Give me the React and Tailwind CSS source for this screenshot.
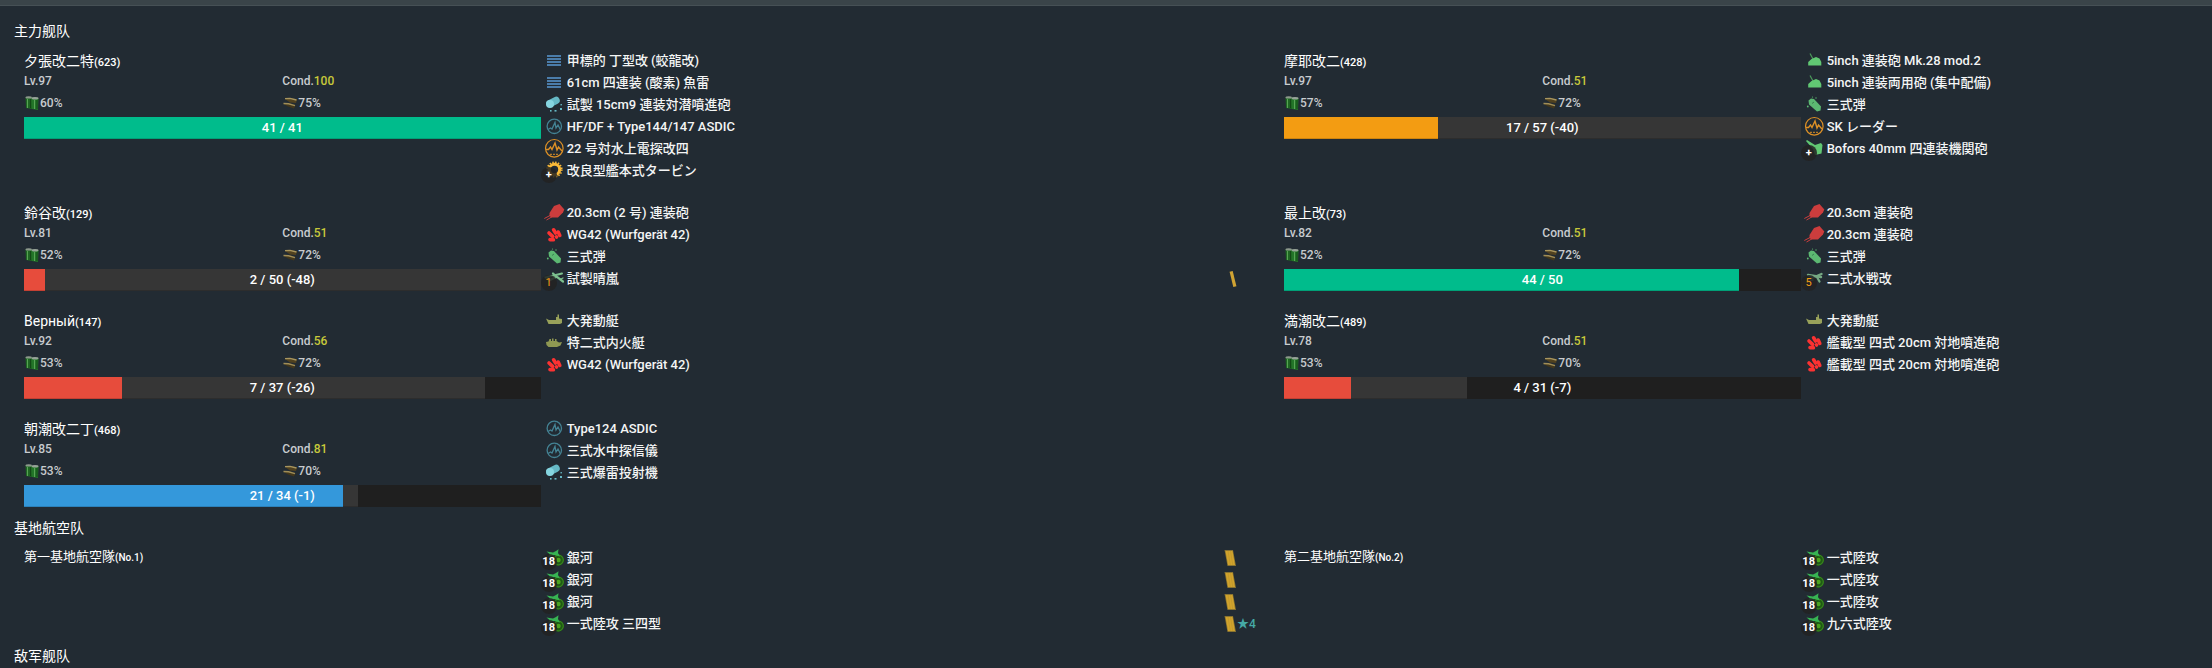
const CJK_FONT = "font-[Roboto,'Noto_Sans_CJK_JP',sans-serif]";

const GLYPHS = {
  torpedo: (
    <g fill="#4b7dab">
      <rect x="4" y="5" width="14" height="2" />
      <rect x="4" y="8" width="14" height="2" />
      <rect x="4" y="11" width="14" height="2" />
      <rect x="4" y="14" width="14" height="2" />
    </g>
  ),
  depth: (
    <g>
      <path d="M7 9.5 13 6.5" stroke="#66b9c6" strokeWidth="7.5" strokeLinecap="round" />
      <circle cx="7" cy="10" r="4" fill="#86d5e0" />
      <g fill="#66b9c6">
        <rect x="7" y="16" width="1.6" height="1.6" />
        <rect x="11.5" y="16" width="2" height="1.6" />
        <rect x="17" y="14" width="2" height="2" />
        <rect x="17.5" y="10" width="1.4" height="1.4" />
      </g>
    </g>
  ),
  sonar: (
    <g fill="none" stroke="#448394">
      <circle cx="11.3" cy="10.3" r="7.2" strokeWidth="1.3" />
      <path d="M5 13.5 7.5 12 9 13 12 6.5 13 12 15 9 17.5 14" strokeWidth="1.3" />
    </g>
  ),
  radar: (
    <g fill="none" stroke="#dd9026">
      <circle cx="11.3" cy="10.3" r="8.8" strokeWidth="1.2" />
      <path d="M3 11.5H5.5L7.5 9 9 11.5 12 5 14 12 15.5 9 19 13" strokeWidth="1.4" />
      <path d="M7 16.3H16" strokeWidth="1" strokeDasharray="2 1" />
    </g>
  ),
  turbine: (
    <g fill="none" stroke="#f9b938">
      <circle cx="11.5" cy="9.5" r="5.2" strokeWidth="3" />
      <circle cx="11.5" cy="9.5" r="7.3" strokeWidth="1.6" strokeDasharray="1.5 1.4" />
    </g>
  ),
  redgun: (
    <g>
      <path d="M6.5 11 11 4 16.5 2 21.3 7.5 20 10.5 15 15.5 8.5 15.5 6.5 14Z" fill="#cc3d3d" />
      <path d="M8 13 1.3 16.5M9.5 14.5 3.5 18" stroke="#cc3d3d" strokeWidth="1" />
    </g>
  ),
  rocket: (
    <g stroke="#fb3232" strokeWidth="3.6" strokeLinecap="round">
      <path d="M10.6 5.8 12.6 9" />
      <path d="M6 9 9.6 12.4" />
      <path d="M15.2 8 16.8 11.4" />
      <path d="M7 15.6 10.4 15.8" />
      <path d="M13.4 12.8 13.6 13" />
    </g>
  ),
  shell: (
    <g fill="#5cb872">
      <path d="M5.5 6.5 8 4.5 11 5 18 12.5 17.5 16.5 14 17.5 6 10.5Z" />
      <path d="M9 9.5 11 8" stroke="#3a8350" />
      <circle cx="4.8" cy="12.5" r="0.9" />
      <circle cx="13" cy="4" r="0.7" />
      <circle cx="9.5" cy="3" r="0.6" />
    </g>
  ),
  seaplane: (
    <g fill="none" stroke="#7cc18e" strokeLinecap="round">
      <path d="M2.5 9.5 19 5.5" strokeWidth="2" />
      <path d="M10 5.5 14 9 20 13.5" strokeWidth="2.2" />
      <path d="M6 12.5 13 9" strokeWidth="2.4" />
      <path d="M17 11.5 20 10" strokeWidth="1.2" />
    </g>
  ),
  seafighter: (
    <g fill="none" stroke="#75a883" strokeLinecap="round">
      <path d="M5 7 18 9" strokeWidth="2.4" />
      <path d="M8 10.5 18.5 6" strokeWidth="2.4" />
      <path d="M14 9 16.5 13.5" strokeWidth="2.2" />
      <path d="M5 12H10" strokeWidth="1.6" />
    </g>
  ),
  landing: (
    <path d="M3 8.5 6 10H13V7H14.5V4.5H16V8.5L19 9V13L17 14H5.5Z" fill="#98a15a" />
  ),
  amphibious: (
    <path d="M3 10 5.5 9.5 6.5 7H8V9H9V6.5H10.5V9H12V7H13.5V9L16 10.5 19 10 17.5 13.5 14 15H5.5L3.5 13Z" fill="#8f9852" />
  ),
  greengun: (
    <g>
      <path d="M7 3.5 10 9" stroke="#4b9a5b" strokeWidth="1.2" />
      <path d="M5.2 15.5V12L8.5 9 13 7 16.5 8.5 18.3 12V15.5Z" fill="#61c873" />
    </g>
  ),
  aagun: (
    <path d="M4 2 12 7 18 5 19.5 7 18.5 15.5 12 17 10 11 3 3Z" fill="#61c873" />
  ),
  bomber: (
    <g>
      <circle cx="15" cy="13" r="5.8" fill="#1f5a14" />
      <circle cx="15.5" cy="13" r="4.8" fill="none" stroke="#38861d" strokeWidth="1.2" />
      <circle cx="15.5" cy="13" r="2.2" fill="#4ba31f" />
      <path d="M3.5 4.5 10 5.5 13 4 15.5 2.3 15 6 17 9.5 11.5 8 5 10 6.5 7Z" fill="#37b353" />
    </g>
  ),
};

function EquipIcon({ kind, badge, badgeTone }) {
  return (
    <span className="relative h-[22px] w-[22px] shrink-0">
      <svg viewBox="0 0 22 22" className="h-[22px] w-[22px]" aria-hidden="true" fill="none">
        {GLYPHS[kind]}
      </svg>
      {badge && (
        <span
          className={`absolute -left-[2px] top-[7px] flex h-4 w-4 items-center justify-center rounded-full bg-[#222222]/85 pb-[2px] text-[11px] leading-none ${
            badgeTone === "orange" ? "font-normal text-[#f39c12]" : "font-bold text-white"
          }`}
        >
          {badge}
        </span>
      )}
    </span>
  );
}

function Proficiency({ marks }) {
  return (
    <svg viewBox="0 0 14 18" className="h-[18px] w-[14px]" aria-hidden="true">
      {marks === 1 ? (
        <path d="M8.5 3 11.5 15" stroke="#d0a333" strokeWidth="3.2" strokeLinecap="square" />
      ) : (
        <>
          <path d="M1.5 1H10L13 17H4.5Z" fill="#8a7430" />
          <path d="M2.5 2H9.5L12 16H5Z" fill="#d1a32c" />
          <path d="M5 2 7.3 16M7.5 2 9.8 16" stroke="#b8932f" strokeWidth="0.6" />
        </>
      )}
    </svg>
  );
}

function Equipment({ items }) {
  return (
    <ul className="col-span-7 pl-[2px] pr-[10px]">
      {items.map((it, i) => (
        <li key={i} className="flex h-[22px] items-center text-[13px] text-[#f4f5f5]">
          <EquipIcon kind={it[0]} badge={it[2]} badgeTone={it[3]} />
          <span className="ml-[2px] grow font-medium">{it[1]}</span>
          {it[4] && <Proficiency marks={it[4]} />}
          <span className="w-[17px] text-[12px] leading-5 font-medium whitespace-nowrap text-[#45a9a5]">{it[5]}</span>
        </li>
      ))}
    </ul>
  );
}

function Fuel() {
  return (
    <svg viewBox="0 0 16 16" className="h-4 w-4" aria-hidden="true">
      <path d="M1.5 2H8V14L2 13Z" fill="#1f6623" />
      <path d="M7.5 3H14.5L14 15 8 14Z" fill="#237528" />
      <path d="M3.5 4V13M10.5 5V14" stroke="#58a456" strokeWidth="1" />
      <path d="M6.5 4V13M13 5V14" stroke="#124816" strokeWidth="1" />
      <ellipse cx="4.7" cy="2.4" rx="3.2" ry="1.2" fill="#8d998d" />
      <ellipse cx="11" cy="3.3" rx="3.5" ry="1.3" fill="#98a498" />
    </svg>
  );
}

function Ammo() {
  return (
    <svg viewBox="0 0 16 16" className="h-4 w-4" aria-hidden="true">
      <path d="M3 4 9 3 15 4.5 14 8 8 7.5Z" fill="#50411f" />
      <path d="M3 3.6 8 3.4 14.5 5" stroke="#a8965f" strokeWidth="1.4" fill="none" />
      <path d="M1 8.5 7 8 13.5 10 12 13.5 6 11.5Z" fill="#43371b" />
      <path d="M1.5 8.5 6.5 8.8 13 10.7" stroke="#9f8d58" strokeWidth="1.4" fill="none" />
    </svg>
  );
}

function HealthBar({ hp, before, max, tone }) {
  const loss = before - hp;
  return (
    <div className="mt-[3px] grid h-[22px] bg-[#1f1f1f] text-[13px] leading-[21px]">
      <div className="col-start-1 row-start-1 flex">
        <div className={`shadow-[inset_0_-1px_0_rgba(0,0,0,0.15)] ${tone}`} style={{ width: `${(hp / max) * 100}%` }} />
        <div
          className="bg-[#363636] shadow-[inset_0_-1px_0_rgba(0,0,0,0.15)]"
          style={{ width: `${(loss / max) * 100}%` }}
        />
      </div>
      <div className="col-start-1 row-start-1 text-center font-medium text-white">
        {hp} / {max}
        {loss > 0 && ` (-${loss})`}
      </div>
    </div>
  );
}

function Ship({ ship }) {
  return (
    <article className="grid grid-cols-12 px-[10px] pb-5">
      <div className="col-span-5 h-[88px]">
        <h3 className="h-[22px] text-[14px] leading-[22px] text-white">
          {ship.name}
          <span className="text-[11px] font-medium">({ship.id})</span>
        </h3>
        <div className="grid grid-cols-2 text-[12px] font-medium text-[#c8cccf]">
          <span className="h-5 leading-[19px]">Lv.{ship.lv}</span>
          <span className="h-5 leading-[19px]">
            Cond.<span className="text-[#c8c93a]">{ship.cond}</span>
          </span>
          <span className="flex h-[22px] items-center">
            <Fuel />
            {ship.fuel}%
          </span>
          <span className="flex h-[22px] items-center">
            <Ammo />
            {ship.ammo}%
          </span>
        </div>
        <HealthBar {...ship} />
      </div>
      <Equipment items={ship.equips} />
    </article>
  );
}

const GREEN = "bg-[#00bc8c]";
const RED = "bg-[#e74c3c]";
const BLUE = "bg-[#3498db]";
const ORANGE = "bg-[#f39c12]";

const FLEET = [
  {
    name: "夕張改二特", id: 623, lv: 97, cond: 100, fuel: 60, ammo: 75, hp: 41, before: 41, max: 41, tone: GREEN,
    equips: [
      ["torpedo", "甲標的 丁型改 (蛟龍改)"],
      ["torpedo", "61cm 四連装 (酸素) 魚雷"],
      ["depth", "試製 15cm9 連装対潜噴進砲"],
      ["sonar", "HF/DF + Type144/147 ASDIC"],
      ["radar", "22 号対水上電探改四"],
      ["turbine", "改良型艦本式タービン", "+"],
    ],
  },
  {
    name: "摩耶改二", id: 428, lv: 97, cond: 51, fuel: 57, ammo: 72, hp: 17, before: 57, max: 57, tone: ORANGE,
    equips: [
      ["greengun", "5inch 連装砲 Mk.28 mod.2"],
      ["greengun", "5inch 連装両用砲 (集中配備)"],
      ["shell", "三式弾"],
      ["radar", "SK レーダー"],
      ["aagun", "Bofors 40mm 四連装機関砲", "+"],
    ],
  },
  {
    name: "鈴谷改", id: 129, lv: 81, cond: 51, fuel: 52, ammo: 72, hp: 2, before: 50, max: 50, tone: RED,
    equips: [
      ["redgun", "20.3cm (2 号) 連装砲"],
      ["rocket", "WG42 (Wurfgerät 42)"],
      ["shell", "三式弾"],
      ["seaplane", "試製晴嵐", "1", "orange", 1],
    ],
  },
  {
    name: "最上改", id: 73, lv: 82, cond: 51, fuel: 52, ammo: 72, hp: 44, before: 44, max: 50, tone: GREEN,
    equips: [
      ["redgun", "20.3cm 連装砲"],
      ["redgun", "20.3cm 連装砲"],
      ["shell", "三式弾"],
      ["seafighter", "二式水戦改", "5", "orange"],
    ],
  },
  {
    name: "Верный", id: 147, lv: 92, cond: 56, fuel: 53, ammo: 72, hp: 7, before: 33, max: 37, tone: RED,
    equips: [
      ["landing", "大発動艇"],
      ["amphibious", "特二式内火艇"],
      ["rocket", "WG42 (Wurfgerät 42)"],
    ],
  },
  {
    name: "満潮改二", id: 489, lv: 78, cond: 51, fuel: 53, ammo: 70, hp: 4, before: 11, max: 31, tone: RED,
    equips: [
      ["landing", "大発動艇"],
      ["rocket", "艦載型 四式 20cm 対地噴進砲"],
      ["rocket", "艦載型 四式 20cm 対地噴進砲"],
    ],
  },
  {
    name: "朝潮改二丁", id: 468, lv: 85, cond: 81, fuel: 53, ammo: 70, hp: 21, before: 22, max: 34, tone: BLUE,
    equips: [
      ["sonar", "Type124 ASDIC"],
      ["sonar", "三式水中探信儀"],
      ["depth", "三式爆雷投射機"],
    ],
  },
];

const SQUADRONS = [
  {
    name: "第一基地航空隊", no: 1,
    equips: [
      ["bomber", "銀河", "18", "", 3],
      ["bomber", "銀河", "18", "", 3],
      ["bomber", "銀河", "18", "", 3],
      ["bomber", "一式陸攻 三四型", "18", "", 3, "★4"],
    ],
  },
  {
    name: "第二基地航空隊", no: 2,
    equips: [
      ["bomber", "一式陸攻", "18", "", 3],
      ["bomber", "一式陸攻", "18", "", 3],
      ["bomber", "一式陸攻", "18", "", 3],
      ["bomber", "九六式陸攻", "18", "", 3],
    ],
  },
];

function SectionTitle({ children }) {
  return <h2 className="mb-2 h-5 text-[14px] leading-[18px] text-white">{children}</h2>;
}

export default function App() {
  return (
    <div lang="ja" className={`min-h-screen overflow-x-hidden bg-[#222b33] ${CJK_FONT}`}>
      <div className="h-[6px] border-b border-[#465055] bg-[#3a4449]" />
      <main className="min-w-[2548px] px-[14px] pt-4">
        <section>
          <SectionTitle>主力舰队</SectionTitle>
          <div className="grid grid-cols-2">
            {FLEET.map((ship) => (
              <Ship key={ship.id} ship={ship} />
            ))}
          </div>
        </section>
        <section className="-mt-[7px]">
          <SectionTitle>基地航空队</SectionTitle>
          <div className="grid grid-cols-2">
            {SQUADRONS.map((s) => (
              <article key={s.no} className="grid grid-cols-12 px-[10px] pb-3">
                <h3 className="col-span-5 h-[22px] text-[13px] leading-[20px] text-white">
                  {s.name}
                  <span className="text-[10px] font-medium">(No.{s.no})</span>
                </h3>
                <Equipment items={s.equips} />
              </article>
            ))}
          </div>
        </section>
        <section>
          <SectionTitle>敌军舰队</SectionTitle>
        </section>
      </main>
    </div>
  );
}
